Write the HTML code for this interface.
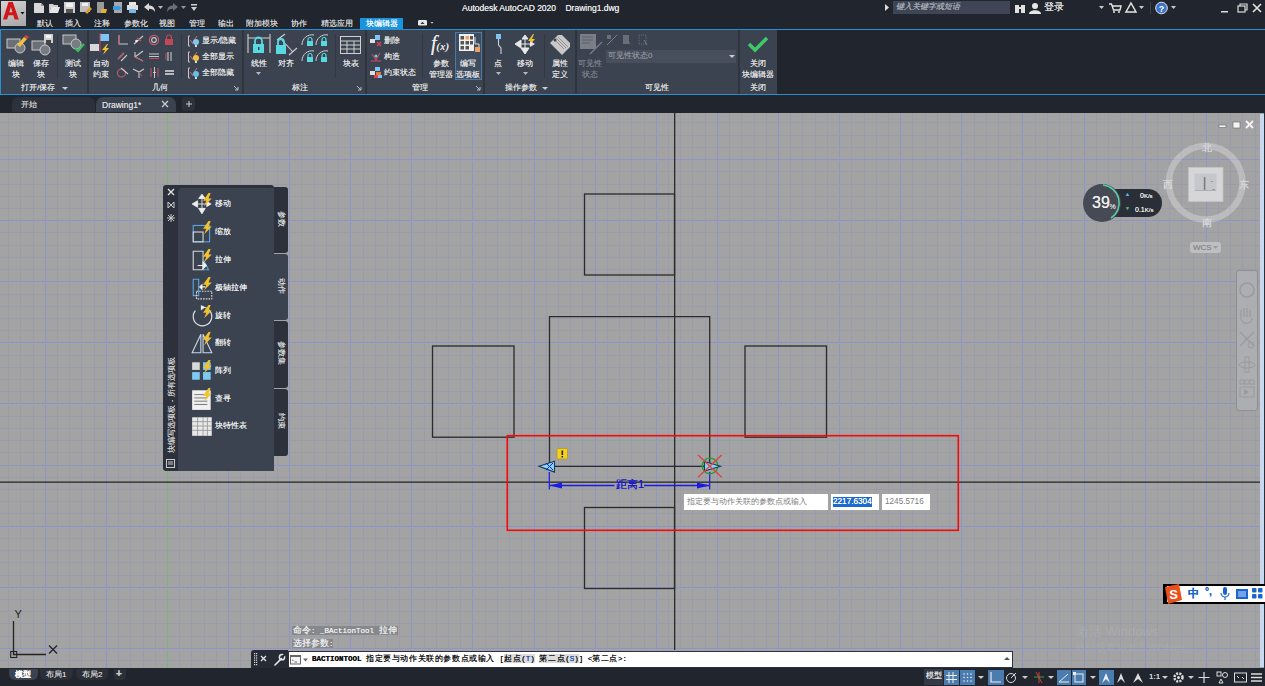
<!DOCTYPE html><html><head><meta charset="utf-8"><style>
*{margin:0;padding:0;box-sizing:border-box}
html,body{width:1265px;height:686px;overflow:hidden;background:#21252d;font-family:"Liberation Sans",sans-serif;color:#e6e6e6}
.a{position:absolute}
.t{position:absolute;white-space:nowrap;line-height:1;font-weight:500;text-shadow:0 0 0.6px currentColor}
svg.a{overflow:visible}
.m{font-family:'Liberation Mono',monospace;font-size:7.5px;letter-spacing:0}
</style></head><body>

<div class="a" style="left:0px;top:0px;width:1265px;height:29px;background:#21252d;"></div>
<div class="a" style="left:1px;top:1px;width:25px;height:25px;background:linear-gradient(160deg,#d4d4d4,#a6a6a6)"></div>
<svg class="a" style="left:0px;top:0px;" width="27" height="27" viewBox="0 0 27 27"><path d="M3 19.5 L8.5 2 H12.8 L18.8 19.5 H14.6 L13.3 15.3 H8.4 L7.1 19.5 Z M9.3 12.3 H12.4 L10.9 7 Z" fill="#d0181c" fill-rule="evenodd"/><path d="M20.5 12 H24.5 L22.5 14.5 Z" fill="#111"/></svg>
<svg class="a" style="left:33px;top:2px;" width="12" height="12" viewBox="0 0 12 12"><path d="M1 1 H8 L11 4 V11 H1 Z" fill="#d8d8d8"/><path d="M8 1 V4 H11" fill="#9a9a9a"/></svg>
<svg class="a" style="left:49px;top:2px;" width="12" height="12" viewBox="0 0 12 12"><path d="M0 2 H4 L5 3 H9 V5 H2 L0 11 Z" fill="#d0d0d0"/><path d="M2 5 H11 L9 11 H0 Z" fill="#e6e6e6"/></svg>
<svg class="a" style="left:64px;top:2px;" width="12" height="12" viewBox="0 0 12 12"><rect x="0" y="0" width="11" height="11" fill="#cfcfcf"/><rect x="2" y="1" width="7" height="4" fill="#f2f2f2"/><rect x="2" y="7" width="7" height="4" fill="#555"/></svg>
<svg class="a" style="left:80px;top:2px;" width="12" height="12" viewBox="0 0 12 12"><rect x="0" y="0" width="10" height="10" fill="#bdbdbd"/><rect x="2" y="1" width="6" height="3" fill="#eee"/><path d="M5 10 L10 5 L12 7 L7 12 Z" fill="#e0a030"/></svg>
<svg class="a" style="left:97px;top:2px;" width="12" height="12" viewBox="0 0 12 12"><rect x="0" y="0" width="7" height="11" fill="#9a9a9a"/><path d="M4 7 H10 L9 11 H4 Z" fill="#e8b030"/></svg>
<svg class="a" style="left:113px;top:2px;" width="12" height="12" viewBox="0 0 12 12"><rect x="1" y="0" width="8" height="11" fill="#a8a8a8"/><path d="M0 4 H6 L9 6 L6 8 H0 Z" fill="#3a9ae0"/></svg>
<svg class="a" style="left:127px;top:2px;" width="12" height="12" viewBox="0 0 12 12"><rect x="2" y="0" width="7" height="3" fill="#e8e8e8"/><rect x="0" y="3" width="11" height="5" fill="#e0e0e0"/><rect x="2" y="7" width="7" height="4" fill="#7ab8e8"/></svg>
<svg class="a" style="left:144px;top:2px;" width="12" height="12" viewBox="0 0 12 12"><path d="M0 5 L5 1 V3.5 C9 3.5 11 6 11 10 C9.5 7.5 8 6.8 5 6.8 V9 Z" fill="#d8d8d8"/></svg>
<svg class="a" style="left:167px;top:2px;" width="12" height="12" viewBox="0 0 12 12"><path d="M11 5 L6 1 V3.5 C2 3.5 0 6 0 10 C1.5 7.5 3 6.8 6 6.8 V9 Z" fill="#6a6e76"/></svg>
<svg class="a" style="left:191px;top:2px;" width="12" height="12" viewBox="0 0 12 12"><rect x="0" y="2" width="6" height="1.5" fill="#d0d0d0"/><path d="M0 5 H6 L3 9 Z" fill="#d0d0d0"/></svg>
<svg class="a" style="left:158px;top:6px;" width="5" height="4" viewBox="0 0 5 4"><path d="M0 0 H5 L2.5 3 Z" fill="#bbb"/></svg>
<svg class="a" style="left:181px;top:6px;" width="5" height="4" viewBox="0 0 5 4"><path d="M0 0 H5 L2.5 3 Z" fill="#999"/></svg>
<div class="t" style="left:462px;top:4px;font-size:8.5px;color:#e8e8e8;">Autodesk AutoCAD 2020&nbsp;&nbsp;&nbsp;&nbsp;Drawing1.dwg</div>
<svg class="a" style="left:885px;top:4px;" width="5" height="7" viewBox="0 0 5 7"><path d="M0 0 L4 3.5 L0 7 Z" fill="#ddd"/></svg>
<div class="a" style="left:893px;top:1px;width:117px;height:13px;background:#3e4554;"></div>
<div class="t" style="left:896px;top:3px;font-size:8px;color:#a8aeb8;font-style:italic">键入关键字或短语</div>
<svg class="a" style="left:1014px;top:3px;" width="12" height="11" viewBox="0 0 12 11"><rect x="1" y="2" width="4" height="8" fill="#e0e0e0"/><rect x="7" y="2" width="4" height="8" fill="#e0e0e0"/><rect x="4" y="4" width="4" height="2" fill="#e0e0e0"/></svg>
<svg class="a" style="left:1029px;top:2px;" width="12" height="12" viewBox="0 0 12 12"><circle cx="6" cy="4" r="3" fill="#e6e6e6"/><path d="M0 12 C0 7 12 7 12 12 Z" fill="#e6e6e6"/></svg>
<div class="t" style="left:1044px;top:2px;font-size:10px;color:#e8e8e8;">登录</div>
<svg class="a" style="left:1099px;top:6px;" width="5" height="4" viewBox="0 0 5 4"><path d="M0 0 H5 L2.5 3 Z" fill="#ccc"/></svg>
<svg class="a" style="left:1109px;top:3px;" width="13" height="10" viewBox="0 0 13 10"><path d="M0 1 H2.5 L4.5 7 H11 L12 3 H3.5" fill="none" stroke="#e6e6e6" stroke-width="1.4"/><circle cx="5" cy="9" r="1" fill="#e6e6e6"/><circle cx="10" cy="9" r="1" fill="#e6e6e6"/></svg>
<svg class="a" style="left:1125px;top:2px;" width="12" height="11" viewBox="0 0 12 11"><path d="M6 1 L11 10 H1 Z" fill="none" stroke="#e6e6e6" stroke-width="1.5"/></svg>
<svg class="a" style="left:1139px;top:6px;" width="5" height="4" viewBox="0 0 5 4"><path d="M0 0 H5 L2.5 3 Z" fill="#ccc"/></svg>
<div class="a" style="left:1150px;top:2px;width:1px;height:12px;background:#3a3f48;"></div>
<svg class="a" style="left:1155px;top:1px;" width="13" height="13" viewBox="0 0 13 13"><circle cx="6.5" cy="7" r="5.8" fill="#3a74cc" stroke="#e8e8e8" stroke-width="1"/><text x="6.5" y="10.5" font-size="9" font-weight="bold" text-anchor="middle" fill="#ffffff" font-family="Liberation Sans">?</text></svg>
<svg class="a" style="left:1171px;top:6px;" width="5" height="4" viewBox="0 0 5 4"><path d="M0 0 H5 L2.5 3 Z" fill="#ccc"/></svg>
<svg class="a" style="left:1219px;top:3px;" width="44" height="10" viewBox="0 0 44 10"><rect x="2" y="8" width="7" height="1.5" fill="#ddd"/><rect x="19" y="3" width="7" height="6" fill="none" stroke="#ddd" stroke-width="1.2"/><path d="M21 3 V1 H28 V7 H26" fill="none" stroke="#ddd" stroke-width="1.2"/><path d="M34 1 L42 9 M42 1 L34 9" stroke="#e6e6e6" stroke-width="1.6"/></svg>
<div class="t" style="left:37px;top:20px;font-size:8px;color:#d4d4d4;">默认</div>
<div class="t" style="left:65px;top:20px;font-size:8px;color:#d4d4d4;">插入</div>
<div class="t" style="left:94px;top:20px;font-size:8px;color:#d4d4d4;">注释</div>
<div class="t" style="left:124px;top:20px;font-size:8px;color:#d4d4d4;">参数化</div>
<div class="t" style="left:159px;top:20px;font-size:8px;color:#d4d4d4;">视图</div>
<div class="t" style="left:189px;top:20px;font-size:8px;color:#d4d4d4;">管理</div>
<div class="t" style="left:218px;top:20px;font-size:8px;color:#d4d4d4;">输出</div>
<div class="t" style="left:246px;top:20px;font-size:8px;color:#d4d4d4;">附加模块</div>
<div class="t" style="left:291px;top:20px;font-size:8px;color:#d4d4d4;">协作</div>
<div class="t" style="left:321px;top:20px;font-size:8px;color:#d4d4d4;">精选应用</div>
<div class="a" style="left:360px;top:18px;width:43px;height:11px;background:#1b94de;"></div>
<div class="t" style="left:366px;top:20px;font-size:8px;color:#ffffff;">块编辑器</div>
<svg class="a" style="left:417px;top:19px;" width="20" height="8" viewBox="0 0 20 8"><rect x="1" y="1" width="9" height="5.5" rx="1.2" fill="#e8e8e8"/><path d="M3.5 5 L5.5 2.8 L7.5 5 Z" fill="#333"/><path d="M13.5 3 H16.5 L15 4.8 Z" fill="#ccc"/></svg>
<div class="a" style="left:0px;top:29px;width:1265px;height:1px;background:#2a8fd0;"></div>
<div class="a" style="left:0px;top:94px;width:1265px;height:1px;background:#2a8fd0;"></div>
<div class="a" style="left:0px;top:30px;width:1265px;height:64px;background:#21252d;"></div>
<div class="a" style="left:0px;top:30px;width:777px;height:64px;background:#3b4250;"></div>
<div class="a" style="left:0px;top:30px;width:1px;height:64px;background:#2a8fd0;"></div>
<div class="a" style="left:87px;top:30px;width:2px;height:64px;background:#2f343d;"></div>
<div class="a" style="left:242px;top:30px;width:2px;height:64px;background:#2f343d;"></div>
<div class="a" style="left:365px;top:30px;width:2px;height:64px;background:#2f343d;"></div>
<div class="a" style="left:483px;top:30px;width:2px;height:64px;background:#2f343d;"></div>
<div class="a" style="left:575px;top:30px;width:2px;height:64px;background:#2f343d;"></div>
<div class="a" style="left:738px;top:30px;width:2px;height:64px;background:#2f343d;"></div>
<div class="a" style="left:57px;top:34px;width:1px;height:44px;background:#323741;"></div>
<div class="a" style="left:181px;top:34px;width:1px;height:44px;background:#323741;"></div>
<div class="a" style="left:335px;top:34px;width:1px;height:44px;background:#323741;"></div>
<div class="a" style="left:422px;top:34px;width:1px;height:44px;background:#323741;"></div>
<div class="a" style="left:544px;top:34px;width:1px;height:44px;background:#323741;"></div>
<div class="t" style="left:-22px;width:120px;text-align:center;top:84px;font-size:8px;color:#e0e0e0;">打开/保存</div>
<svg class="a" style="left:62px;top:87px;" width="6" height="4" viewBox="0 0 6 4"><path d="M0 0 H6 L3 3 Z" fill="#ccc"/></svg>
<div class="t" style="left:100px;width:120px;text-align:center;top:84px;font-size:8px;color:#e0e0e0;">几何</div>
<div class="t" style="left:240px;width:120px;text-align:center;top:84px;font-size:8px;color:#e0e0e0;">标注</div>
<div class="t" style="left:360px;width:120px;text-align:center;top:84px;font-size:8px;color:#e0e0e0;">管理</div>
<div class="t" style="left:461px;width:120px;text-align:center;top:84px;font-size:8px;color:#e0e0e0;">操作参数</div>
<svg class="a" style="left:542px;top:87px;" width="6" height="4" viewBox="0 0 6 4"><path d="M0 0 H6 L3 3 Z" fill="#ccc"/></svg>
<div class="t" style="left:597px;width:120px;text-align:center;top:84px;font-size:8px;color:#e0e0e0;">可见性</div>
<div class="t" style="left:698px;width:120px;text-align:center;top:84px;font-size:8px;color:#e0e0e0;">关闭</div>
<svg class="a" style="left:234px;top:86px;" width="5" height="5" viewBox="0 0 5 5"><path d="M0 0 L4 4 M4 1 V4 H1" stroke="#bbb" stroke-width="1" fill="none"/></svg>
<svg class="a" style="left:357px;top:86px;" width="5" height="5" viewBox="0 0 5 5"><path d="M0 0 L4 4 M4 1 V4 H1" stroke="#bbb" stroke-width="1" fill="none"/></svg>
<svg class="a" style="left:476px;top:86px;" width="5" height="5" viewBox="0 0 5 5"><path d="M0 0 L4 4 M4 1 V4 H1" stroke="#bbb" stroke-width="1" fill="none"/></svg>
<svg class="a" style="left:5px;top:34px;" width="24" height="20" viewBox="0 0 24 20"><rect x="2" y="5" width="13" height="9" fill="#6b6f77" stroke="#c8c8c8" stroke-width="1"/><circle cx="15" cy="14" r="5" fill="#777b82" stroke="#c8c8c8" stroke-width="1"/><path d="M12 11 L19 3 L22 5 L15 13 Z" fill="#f0c040"/><path d="M19 3 L21 1 L24 3 L22 5 Z" fill="#e04040"/></svg>
<div class="t" style="left:-44px;width:120px;text-align:center;top:60px;font-size:8px;color:#e4e4e4;">编辑</div>
<div class="t" style="left:-44px;width:120px;text-align:center;top:71px;font-size:8px;color:#e4e4e4;">块</div>
<svg class="a" style="left:30px;top:34px;" width="24" height="20" viewBox="0 0 24 20"><rect x="2" y="7" width="13" height="9" fill="#6b6f77" stroke="#c8c8c8" stroke-width="1"/><circle cx="15" cy="16" r="5" fill="#777b82" stroke="#c8c8c8" stroke-width="1"/><rect x="14" y="0" width="9" height="9" fill="#d0d0d0"/><rect x="16" y="1" width="5" height="3" fill="#f4f4f4"/><rect x="16" y="6" width="5" height="3" fill="#444"/></svg>
<div class="t" style="left:-19px;width:120px;text-align:center;top:60px;font-size:8px;color:#e4e4e4;">保存</div>
<div class="t" style="left:-19px;width:120px;text-align:center;top:71px;font-size:8px;color:#e4e4e4;">块</div>
<svg class="a" style="left:62px;top:34px;" width="24" height="20" viewBox="0 0 24 20"><rect x="1" y="1" width="13" height="9" fill="#6b6f77" stroke="#c8c8c8" stroke-width="1"/><circle cx="14" cy="10" r="5" fill="#777b82" stroke="#c8c8c8" stroke-width="1"/><path d="M13 14 L16 17 L22 10" stroke="#3cc060" stroke-width="2.2" fill="none"/></svg>
<div class="t" style="left:13px;width:120px;text-align:center;top:60px;font-size:8px;color:#e4e4e4;">测试</div>
<div class="t" style="left:13px;width:120px;text-align:center;top:71px;font-size:8px;color:#e4e4e4;">块</div>
<svg class="a" style="left:90px;top:33px;" width="24" height="24" viewBox="0 0 24 24"><rect x="10" y="1" width="9" height="7" fill="#7ec4f4"/><rect x="0" y="11" width="9" height="7" fill="#d8d8d8"/><rect x="9.5" y="0" width="1" height="19" fill="#d04050"/><path d="M17 11 L12 17 H15 L13 22 L19 15 H16 L18 11 Z" fill="#f0c030"/></svg>
<div class="t" style="left:41px;width:120px;text-align:center;top:60px;font-size:8px;color:#e4e4e4;">自动</div>
<div class="t" style="left:41px;width:120px;text-align:center;top:71px;font-size:8px;color:#e4e4e4;">约束</div>
<svg class="a" style="left:117px;top:35px;" width="11" height="11" viewBox="0 0 11 11"><path d="M2 0 V9 H11" stroke="#c8c8c8" stroke-width="1.2" fill="none"/><path d="M2 0 V9" stroke="#c05060" stroke-width="1.2"/></svg>
<svg class="a" style="left:133px;top:35px;" width="11" height="11" viewBox="0 0 11 11"><path d="M1 9 L10 1" stroke="#c8c8c8" stroke-width="1.2"/><path d="M4 3 L8 6" stroke="#c05060" stroke-width="1.2"/><circle cx="3.5" cy="6" r="1.3" fill="#eee"/></svg>
<svg class="a" style="left:149px;top:35px;" width="11" height="11" viewBox="0 0 11 11"><circle cx="5" cy="5" r="4.6" stroke="#c85a68" stroke-width="1.2" fill="none"/><circle cx="5" cy="5" r="2.3" stroke="#c8c8c8" stroke-width="1.2" fill="none"/></svg>
<svg class="a" style="left:164px;top:35px;" width="11" height="11" viewBox="0 0 11 11"><rect x="1" y="4" width="8" height="6" fill="#c04858"/><path d="M2.5 4 V2.5 A2.5 2.5 0 0 1 7.5 2.5 V4" stroke="#c04858" stroke-width="1.2" fill="none"/></svg>
<svg class="a" style="left:117px;top:51px;" width="11" height="11" viewBox="0 0 11 11"><path d="M1 8 L7 2 M4 10 L10 4" stroke="#c8c8c8" stroke-width="1.1"/><path d="M1 8 L7 2" stroke="#c05060" stroke-width="1.1"/></svg>
<svg class="a" style="left:133px;top:51px;" width="11" height="11" viewBox="0 0 11 11"><path d="M2 1 V6 L10 10 M2 6 L10 0" stroke="#c8c8c8" stroke-width="1.1" fill="none"/><path d="M2 6 L10 10" stroke="#c05060" stroke-width="1.1"/></svg>
<svg class="a" style="left:149px;top:51px;" width="11" height="11" viewBox="0 0 11 11"><path d="M0 3 H10 M0 5.5 H10" stroke="#c8c8c8" stroke-width="1.1"/><path d="M0 7.5 H10" stroke="#c05060" stroke-width="1"/></svg>
<svg class="a" style="left:164px;top:51px;" width="11" height="11" viewBox="0 0 11 11"><path d="M4 1 V10 M7 1 V10" stroke="#c8c8c8" stroke-width="1.1"/><path d="M2 2 V9" stroke="#c05060" stroke-width="1"/></svg>
<svg class="a" style="left:117px;top:67px;" width="11" height="11" viewBox="0 0 11 11"><circle cx="4.5" cy="6" r="4" stroke="#c85a68" stroke-width="1.1" fill="none"/><path d="M4 1 L11 7" stroke="#c8c8c8" stroke-width="1.1"/></svg>
<svg class="a" style="left:133px;top:67px;" width="11" height="11" viewBox="0 0 11 11"><path d="M0 2 L6 5 L11 2 M6 5 V11" stroke="#c8c8c8" stroke-width="1.1" fill="none"/><path d="M6 5 L9 9" stroke="#c05060" stroke-width="1"/></svg>
<svg class="a" style="left:149px;top:67px;" width="11" height="11" viewBox="0 0 11 11"><path d="M2 1 V10 M9 1 V10" stroke="#c05060" stroke-width="1.1"/><path d="M5.5 0 V11 M4 5.5 H7" stroke="#c8c8c8" stroke-width="1"/></svg>
<svg class="a" style="left:164px;top:67px;" width="11" height="11" viewBox="0 0 11 11"><path d="M1 4 H10 M1 7 H10" stroke="#e0e0e0" stroke-width="1.4"/></svg>
<svg class="a" style="left:188px;top:35px;" width="12" height="13" viewBox="0 0 12 13"><path d="M2 1 H0.5 V11 H2" stroke="#c8c8c8" stroke-width="1" fill="none"/><path d="M2 5 L4.5 8 L9 1" stroke="#c86070" stroke-width="1.1" fill="none"/><circle cx="8" cy="7" r="3" fill="#7cc8f0"/><rect x="7" y="10" width="2" height="2" fill="#ddd"/></svg>
<div class="t" style="left:202px;top:37px;font-size:8px;color:#e4e4e4;">显示/隐藏</div>
<svg class="a" style="left:188px;top:51px;" width="12" height="13" viewBox="0 0 12 13"><path d="M2 1 H0.5 V11 H2" stroke="#c8c8c8" stroke-width="1" fill="none"/><path d="M2 5 L4.5 8 L9 1" stroke="#c86070" stroke-width="1.1" fill="none"/><circle cx="8" cy="7" r="3" fill="#f0c040"/><rect x="7" y="10" width="2" height="2" fill="#ddd"/></svg>
<div class="t" style="left:202px;top:53px;font-size:8px;color:#e4e4e4;">全部显示</div>
<svg class="a" style="left:188px;top:66.5px;" width="12" height="13" viewBox="0 0 12 13"><path d="M2 1 H0.5 V11 H2" stroke="#c8c8c8" stroke-width="1" fill="none"/><path d="M2 5 L4.5 8 L9 1" stroke="#c86070" stroke-width="1.1" fill="none"/><circle cx="8" cy="7" r="3" fill="#60c0e8"/><rect x="7" y="10" width="2" height="2" fill="#ddd"/></svg>
<div class="t" style="left:202px;top:68.5px;font-size:8px;color:#e4e4e4;">全部隐藏</div>
<svg class="a" style="left:247px;top:33px;" width="24" height="24" viewBox="0 0 24 24"><path d="M1 1 V20 M23 1 V20 M1 5 H23" stroke="#d0d0d0" stroke-width="1.1"/><rect x="6" y="11" width="11" height="9" fill="#58d8e0"/><path d="M8 11 V8 A3.5 3.5 0 0 1 15 8 V11" stroke="#58d8e0" stroke-width="1.8" fill="none"/><rect x="11" y="14" width="1.5" height="3" fill="#3b4250"/></svg>
<div class="t" style="left:199px;width:120px;text-align:center;top:60px;font-size:8px;color:#e4e4e4;">线性</div>
<svg class="a" style="left:256px;top:72px;" width="5" height="4" viewBox="0 0 5 4"><path d="M0 0 H5 L2.5 3 Z" fill="#bbb"/></svg>
<svg class="a" style="left:275px;top:33px;" width="24" height="24" viewBox="0 0 24 24"><path d="M2 7 L10 1 M14 22 L22 15 M5 5 L18 19" stroke="#d0d0d0" stroke-width="1.1"/><rect x="1" y="12" width="10" height="9" fill="#58d8e0"/><path d="M3 12 V9 A3 3 0 0 1 9 9 V12" stroke="#58d8e0" stroke-width="1.8" fill="none"/></svg>
<div class="t" style="left:226px;width:120px;text-align:center;top:60px;font-size:8px;color:#e4e4e4;">对齐</div>
<svg class="a" style="left:301px;top:33px;" width="15" height="15" viewBox="0 0 15 15"><path d="M1 12 A10 10 0 0 1 13 2" stroke="#d0d0d0" stroke-width="1" fill="none"/><rect x="6" y="8" width="6" height="5" fill="#58d8e0"/><path d="M7 8 V6.5 A2 2 0 0 1 11 6.5 V8" stroke="#58d8e0" stroke-width="1.2" fill="none"/></svg>
<svg class="a" style="left:315px;top:33px;" width="15" height="15" viewBox="0 0 15 15"><path d="M1 12 A10 10 0 0 1 13 2" stroke="#d0d0d0" stroke-width="1" fill="none"/><rect x="6" y="8" width="6" height="5" fill="#58d8e0"/><path d="M7 8 V6.5 A2 2 0 0 1 11 6.5 V8" stroke="#58d8e0" stroke-width="1.2" fill="none"/></svg>
<svg class="a" style="left:301px;top:49px;" width="15" height="15" viewBox="0 0 15 15"><path d="M1 12 A10 10 0 0 1 13 2" stroke="#d0d0d0" stroke-width="1" fill="none"/><rect x="6" y="8" width="6" height="5" fill="#58d8e0"/><path d="M7 8 V6.5 A2 2 0 0 1 11 6.5 V8" stroke="#58d8e0" stroke-width="1.2" fill="none"/></svg>
<svg class="a" style="left:315px;top:49px;" width="15" height="15" viewBox="0 0 15 15"><path d="M1 12 A10 10 0 0 1 13 2" stroke="#d0d0d0" stroke-width="1" fill="none"/><rect x="6" y="8" width="6" height="5" fill="#58d8e0"/><path d="M7 8 V6.5 A2 2 0 0 1 11 6.5 V8" stroke="#58d8e0" stroke-width="1.2" fill="none"/></svg>
<svg class="a" style="left:340px;top:36px;" width="21" height="19" viewBox="0 0 21 19"><rect x="0.5" y="0.5" width="20" height="17" fill="none" stroke="#d0d0d0" stroke-width="1"/><path d="M0.5 5 H20.5 M0.5 9 H20.5 M0.5 13 H20.5 M7 5 V17.5 M14 5 V17.5" stroke="#d0d0d0" stroke-width="1"/></svg>
<div class="t" style="left:291px;width:120px;text-align:center;top:60px;font-size:8px;color:#e4e4e4;">块表</div>
<svg class="a" style="left:370px;top:35px;" width="12" height="12" viewBox="0 0 12 12"><rect x="5" y="0" width="5" height="5" fill="#7ec4f4"/><rect x="0" y="4" width="5" height="4" fill="#e0e0e0"/><path d="M7 7 L11 11 M11 7 L7 11" stroke="#e04050" stroke-width="1.3"/></svg>
<div class="t" style="left:384px;top:37px;font-size:8px;color:#e4e4e4;">删除</div>
<svg class="a" style="left:370px;top:51px;" width="12" height="12" viewBox="0 0 12 12"><path d="M1 10 H11 M2 3 L6 9 L10 2" stroke="#c85060" stroke-width="1.1" fill="none"/><circle cx="6" cy="5" r="1.5" fill="#7ec4f4"/></svg>
<div class="t" style="left:384px;top:53px;font-size:8px;color:#e4e4e4;">构造</div>
<svg class="a" style="left:370px;top:66.5px;" width="12" height="12" viewBox="0 0 12 12"><rect x="5" y="0" width="5" height="4" fill="#7ec4f4"/><rect x="0" y="4" width="5" height="4" fill="#e0e0e0"/><rect x="6" y="5" width="5" height="3" fill="#e87830"/><rect x="4" y="8" width="4" height="3" fill="#e04050"/><rect x="8" y="8" width="4" height="3" fill="#7ec4f4"/></svg>
<div class="t" style="left:384px;top:68.5px;font-size:8px;color:#e4e4e4;">约束状态</div>
<div class="t" style="left:431px;top:33px;font-size:20px;font-style:italic;color:#e8e8e8;font-family:'Liberation Serif',serif">f<span style="font-size:11px">(x)</span></div>
<div class="t" style="left:381px;width:120px;text-align:center;top:60px;font-size:8px;color:#e4e4e4;">参数</div>
<div class="t" style="left:381px;width:120px;text-align:center;top:71px;font-size:8px;color:#e4e4e4;">管理器</div>
<div class="a" style="left:455px;top:32px;width:27px;height:48px;background:#3e4c5e;border:1px solid #4a78a8"></div>
<svg class="a" style="left:459px;top:34px;" width="22" height="24" viewBox="0 0 22 24"><rect x="0" y="0" width="15" height="17" fill="#f0f0f0"/><g fill="#555"><rect x="1.5" y="2" width="3.5" height="3.5"/><rect x="1.5" y="7" width="3.5" height="3.5"/><rect x="1.5" y="12" width="3.5" height="3.5"/><rect x="6.5" y="7" width="3.5" height="3.5"/><rect x="6.5" y="12" width="3.5" height="3.5"/><rect x="11" y="2" width="3" height="3.5"/><rect x="11" y="7" width="3" height="3.5"/></g><rect x="6.5" y="2" width="3.5" height="3.5" fill="#f0a060"/><path d="M16 3 V10 H20 V13" stroke="#e0e0e0" stroke-width="1" fill="none"/><rect x="16" y="13" width="5" height="5" fill="#f0a060"/></svg>
<div class="t" style="left:408px;width:120px;text-align:center;top:60px;font-size:8px;color:#e4e4e4;">编写</div>
<div class="t" style="left:408px;width:120px;text-align:center;top:71px;font-size:8px;color:#e4e4e4;">选项板</div>
<svg class="a" style="left:492px;top:33px;" width="14" height="24" viewBox="0 0 14 24"><rect x="4" y="1" width="5" height="5" fill="#7ec4f4"/><path d="M6.5 6 V12 L9 15 V21" stroke="#d0d0d0" stroke-width="1.1" fill="none"/></svg>
<div class="t" style="left:438px;width:120px;text-align:center;top:60px;font-size:8px;color:#e4e4e4;">点</div>
<svg class="a" style="left:496px;top:72px;" width="5" height="4" viewBox="0 0 5 4"><path d="M0 0 H5 L2.5 3 Z" fill="#bbb"/></svg>
<svg class="a" style="left:514px;top:33px;" width="24" height="24" viewBox="0 0 24 24"><path d="M1 11 L7 7 V15 Z M11 21 L7 15 H15 Z M7 11 H16 M11 6 V16 M11 2 L8 6 H14 Z" fill="#e8e8e8" stroke="#e8e8e8" stroke-width="1"/><path d="M19 1 L14 8 H17 L15 13 L21 6 H18 L20 1 Z" fill="#f0c030"/><path d="M21 11 L16 8 V14 Z" fill="#e8e8e8"/></svg>
<div class="t" style="left:465px;width:120px;text-align:center;top:60px;font-size:8px;color:#e4e4e4;">移动</div>
<svg class="a" style="left:523px;top:72px;" width="5" height="4" viewBox="0 0 5 4"><path d="M0 0 H5 L2.5 3 Z" fill="#bbb"/></svg>
<svg class="a" style="left:549px;top:34px;" width="22" height="22" viewBox="0 0 22 22"><path d="M1 9 L9 1 H13 L21 9 V13 L13 21 L1 9 Z" fill="#c8c8c8" transform="rotate(0)"/><path d="M5 5 L15 15 M7 4 L17 14 M9 3 L19 13" stroke="#888" stroke-width="0.8"/><circle cx="6" cy="6" r="1.5" fill="#3b4250"/></svg>
<div class="t" style="left:500px;width:120px;text-align:center;top:60px;font-size:8px;color:#e4e4e4;">属性</div>
<div class="t" style="left:500px;width:120px;text-align:center;top:71px;font-size:8px;color:#e4e4e4;">定义</div>
<svg class="a" style="left:580px;top:34px;" width="23" height="22" viewBox="0 0 23 22"><rect x="0" y="0" width="16" height="15" fill="#7a7e86"/><path d="M2 3 H13 M2 6 H13 M2 9 H10" stroke="#5a5e66" stroke-width="1.2"/><path d="M10 20 L22 8" stroke="#7a7e86" stroke-width="1.2"/></svg>
<div class="t" style="left:530px;width:120px;text-align:center;top:60px;font-size:8px;color:#7a7f88;">可见性</div>
<div class="t" style="left:530px;width:120px;text-align:center;top:71px;font-size:8px;color:#7a7f88;">状态</div>
<svg class="a" style="left:607px;top:35px;" width="48" height="11" viewBox="0 0 48 11"><rect x="0" y="0" width="4" height="4" fill="#6a6e76"/><path d="M0 10 L10 0" stroke="#7a7e86" stroke-width="1"/><rect x="16" y="0" width="6" height="9" fill="#6a6e76"/><path d="M21 5 L24 10 L22 8 Z" fill="#7a7e86"/><rect x="32" y="0" width="7" height="9" fill="none" stroke="#6a6e76" stroke-dasharray="1 1"/><path d="M37 5 L40 10" stroke="#7a7e86"/></svg>
<div class="a" style="left:606px;top:50px;width:130px;height:13px;background:#474e5c;"></div>
<div class="t" style="left:608px;top:52px;font-size:8px;color:#8a8f98;">可见性状态0</div>
<svg class="a" style="left:729px;top:55px;" width="6" height="4" viewBox="0 0 6 4"><path d="M0 0 H6 L3 3 Z" fill="#ccc"/></svg>
<svg class="a" style="left:747px;top:36px;" width="22" height="16" viewBox="0 0 22 16"><path d="M2 8 L8 14 L20 2" stroke="#40c868" stroke-width="3.5" fill="none"/></svg>
<div class="t" style="left:698px;width:120px;text-align:center;top:60px;font-size:8px;color:#e4e4e4;">关闭</div>
<div class="t" style="left:698px;width:120px;text-align:center;top:71px;font-size:8px;color:#e4e4e4;">块编辑器</div>
<div class="a" style="left:0px;top:95px;width:1265px;height:18px;background:#21252d;"></div>
<div class="a" style="left:12px;top:97px;width:83px;height:15px;background:#2c313b;border-radius:7px 7px 0 0"></div>
<div class="a" style="left:96px;top:97px;width:80px;height:15px;background:#3b4250;border-radius:7px 7px 0 0"></div>
<div class="a" style="left:182px;top:97px;width:13px;height:14px;background:#2c313b;border-radius:3px"></div>
<div class="t" style="left:21px;top:101px;font-size:8px;color:#c8c8c8;">开始</div>
<div class="t" style="left:102px;top:100.5px;font-size:8.5px;color:#d8d8d8;">Drawing1*</div>
<svg class="a" style="left:161px;top:100px;" width="8" height="8" viewBox="0 0 8 8"><path d="M1 1 L7 7 M7 1 L1 7" stroke="#ccc" stroke-width="1.3"/></svg>
<svg class="a" style="left:185px;top:100px;" width="8" height="8" viewBox="0 0 8 8"><path d="M4 1 V7 M1 4 H7" stroke="#c4c4c4" stroke-width="1.1"/></svg>
<div class="a" style="left:0;top:113px;width:1265px;height:555px;background:#a3a3a4;overflow:hidden">
<svg width="1265" height="555" style="position:absolute;left:0;top:0" shape-rendering="crispEdges"><rect x="8" y="0" width="1" height="555" fill="#9b9ca9"/><rect x="20" y="0" width="1" height="555" fill="#9b9ca9"/><rect x="33" y="0" width="1" height="555" fill="#9b9ca9"/><rect x="45" y="0" width="1" height="555" fill="#9095bc"/><rect x="46" y="0" width="1" height="555" fill="#a0a2b4"/><rect x="57" y="0" width="1" height="555" fill="#9b9ca9"/><rect x="69" y="0" width="1" height="555" fill="#9b9ca9"/><rect x="81" y="0" width="1" height="555" fill="#9b9ca9"/><rect x="94" y="0" width="1" height="555" fill="#9b9ca9"/><rect x="106" y="0" width="1" height="555" fill="#9095bc"/><rect x="107" y="0" width="1" height="555" fill="#a0a2b4"/><rect x="118" y="0" width="1" height="555" fill="#9b9ca9"/><rect x="130" y="0" width="1" height="555" fill="#9b9ca9"/><rect x="143" y="0" width="1" height="555" fill="#9b9ca9"/><rect x="155" y="0" width="1" height="555" fill="#9b9ca9"/><rect x="167" y="0" width="1" height="555" fill="#80b080"/><rect x="168" y="0" width="1" height="555" fill="#98ac98"/><rect x="179" y="0" width="1" height="555" fill="#9b9ca9"/><rect x="191" y="0" width="1" height="555" fill="#9b9ca9"/><rect x="204" y="0" width="1" height="555" fill="#9b9ca9"/><rect x="216" y="0" width="1" height="555" fill="#9b9ca9"/><rect x="228" y="0" width="1" height="555" fill="#9095bc"/><rect x="229" y="0" width="1" height="555" fill="#a0a2b4"/><rect x="240" y="0" width="1" height="555" fill="#9b9ca9"/><rect x="253" y="0" width="1" height="555" fill="#9b9ca9"/><rect x="265" y="0" width="1" height="555" fill="#9b9ca9"/><rect x="277" y="0" width="1" height="555" fill="#9b9ca9"/><rect x="289" y="0" width="1" height="555" fill="#9095bc"/><rect x="290" y="0" width="1" height="555" fill="#a0a2b4"/><rect x="301" y="0" width="1" height="555" fill="#9b9ca9"/><rect x="314" y="0" width="1" height="555" fill="#9b9ca9"/><rect x="326" y="0" width="1" height="555" fill="#9b9ca9"/><rect x="338" y="0" width="1" height="555" fill="#9b9ca9"/><rect x="350" y="0" width="1" height="555" fill="#9095bc"/><rect x="351" y="0" width="1" height="555" fill="#a0a2b4"/><rect x="363" y="0" width="1" height="555" fill="#9b9ca9"/><rect x="375" y="0" width="1" height="555" fill="#9b9ca9"/><rect x="387" y="0" width="1" height="555" fill="#9b9ca9"/><rect x="399" y="0" width="1" height="555" fill="#9b9ca9"/><rect x="411" y="0" width="1" height="555" fill="#9095bc"/><rect x="412" y="0" width="1" height="555" fill="#a0a2b4"/><rect x="424" y="0" width="1" height="555" fill="#9b9ca9"/><rect x="436" y="0" width="1" height="555" fill="#9b9ca9"/><rect x="448" y="0" width="1" height="555" fill="#9b9ca9"/><rect x="460" y="0" width="1" height="555" fill="#9b9ca9"/><rect x="472" y="0" width="1" height="555" fill="#9095bc"/><rect x="473" y="0" width="1" height="555" fill="#a0a2b4"/><rect x="485" y="0" width="1" height="555" fill="#9b9ca9"/><rect x="497" y="0" width="1" height="555" fill="#9b9ca9"/><rect x="509" y="0" width="1" height="555" fill="#9b9ca9"/><rect x="521" y="0" width="1" height="555" fill="#9b9ca9"/><rect x="534" y="0" width="1" height="555" fill="#9095bc"/><rect x="535" y="0" width="1" height="555" fill="#a0a2b4"/><rect x="546" y="0" width="1" height="555" fill="#9b9ca9"/><rect x="558" y="0" width="1" height="555" fill="#9b9ca9"/><rect x="570" y="0" width="1" height="555" fill="#9b9ca9"/><rect x="582" y="0" width="1" height="555" fill="#9b9ca9"/><rect x="595" y="0" width="1" height="555" fill="#9095bc"/><rect x="596" y="0" width="1" height="555" fill="#a0a2b4"/><rect x="607" y="0" width="1" height="555" fill="#9b9ca9"/><rect x="619" y="0" width="1" height="555" fill="#9b9ca9"/><rect x="631" y="0" width="1" height="555" fill="#9b9ca9"/><rect x="644" y="0" width="1" height="555" fill="#9b9ca9"/><rect x="656" y="0" width="1" height="555" fill="#9095bc"/><rect x="657" y="0" width="1" height="555" fill="#a0a2b4"/><rect x="668" y="0" width="1" height="555" fill="#9b9ca9"/><rect x="680" y="0" width="1" height="555" fill="#9b9ca9"/><rect x="692" y="0" width="1" height="555" fill="#9b9ca9"/><rect x="705" y="0" width="1" height="555" fill="#9b9ca9"/><rect x="717" y="0" width="1" height="555" fill="#9095bc"/><rect x="718" y="0" width="1" height="555" fill="#a0a2b4"/><rect x="729" y="0" width="1" height="555" fill="#9b9ca9"/><rect x="741" y="0" width="1" height="555" fill="#9b9ca9"/><rect x="754" y="0" width="1" height="555" fill="#9b9ca9"/><rect x="766" y="0" width="1" height="555" fill="#9b9ca9"/><rect x="778" y="0" width="1" height="555" fill="#9095bc"/><rect x="779" y="0" width="1" height="555" fill="#a0a2b4"/><rect x="790" y="0" width="1" height="555" fill="#9b9ca9"/><rect x="802" y="0" width="1" height="555" fill="#9b9ca9"/><rect x="815" y="0" width="1" height="555" fill="#9b9ca9"/><rect x="827" y="0" width="1" height="555" fill="#9b9ca9"/><rect x="839" y="0" width="1" height="555" fill="#9095bc"/><rect x="840" y="0" width="1" height="555" fill="#a0a2b4"/><rect x="851" y="0" width="1" height="555" fill="#9b9ca9"/><rect x="864" y="0" width="1" height="555" fill="#9b9ca9"/><rect x="876" y="0" width="1" height="555" fill="#9b9ca9"/><rect x="888" y="0" width="1" height="555" fill="#9b9ca9"/><rect x="900" y="0" width="1" height="555" fill="#9095bc"/><rect x="901" y="0" width="1" height="555" fill="#a0a2b4"/><rect x="912" y="0" width="1" height="555" fill="#9b9ca9"/><rect x="925" y="0" width="1" height="555" fill="#9b9ca9"/><rect x="937" y="0" width="1" height="555" fill="#9b9ca9"/><rect x="949" y="0" width="1" height="555" fill="#9b9ca9"/><rect x="961" y="0" width="1" height="555" fill="#9095bc"/><rect x="962" y="0" width="1" height="555" fill="#a0a2b4"/><rect x="974" y="0" width="1" height="555" fill="#9b9ca9"/><rect x="986" y="0" width="1" height="555" fill="#9b9ca9"/><rect x="998" y="0" width="1" height="555" fill="#9b9ca9"/><rect x="1010" y="0" width="1" height="555" fill="#9b9ca9"/><rect x="1022" y="0" width="1" height="555" fill="#9095bc"/><rect x="1023" y="0" width="1" height="555" fill="#a0a2b4"/><rect x="1035" y="0" width="1" height="555" fill="#9b9ca9"/><rect x="1047" y="0" width="1" height="555" fill="#9b9ca9"/><rect x="1059" y="0" width="1" height="555" fill="#9b9ca9"/><rect x="1071" y="0" width="1" height="555" fill="#9b9ca9"/><rect x="1084" y="0" width="1" height="555" fill="#9095bc"/><rect x="1085" y="0" width="1" height="555" fill="#a0a2b4"/><rect x="1096" y="0" width="1" height="555" fill="#9b9ca9"/><rect x="1108" y="0" width="1" height="555" fill="#9b9ca9"/><rect x="1120" y="0" width="1" height="555" fill="#9b9ca9"/><rect x="1132" y="0" width="1" height="555" fill="#9b9ca9"/><rect x="1145" y="0" width="1" height="555" fill="#9095bc"/><rect x="1146" y="0" width="1" height="555" fill="#a0a2b4"/><rect x="1157" y="0" width="1" height="555" fill="#9b9ca9"/><rect x="1169" y="0" width="1" height="555" fill="#9b9ca9"/><rect x="1181" y="0" width="1" height="555" fill="#9b9ca9"/><rect x="1193" y="0" width="1" height="555" fill="#9b9ca9"/><rect x="1206" y="0" width="1" height="555" fill="#9095bc"/><rect x="1207" y="0" width="1" height="555" fill="#a0a2b4"/><rect x="1218" y="0" width="1" height="555" fill="#9b9ca9"/><rect x="1230" y="0" width="1" height="555" fill="#9b9ca9"/><rect x="1242" y="0" width="1" height="555" fill="#9b9ca9"/><rect x="1255" y="0" width="1" height="555" fill="#9b9ca9"/><rect x="0" y="9" width="1265" height="1" fill="#9b9ca9"/><rect x="0" y="22" width="1265" height="1" fill="#9b9ca9"/><rect x="0" y="34" width="1265" height="1" fill="#9b9ca9"/><rect x="0" y="46" width="1265" height="1" fill="#9095bc"/><rect x="0" y="47" width="1265" height="1" fill="#a0a2b4"/><rect x="0" y="58" width="1265" height="1" fill="#9b9ca9"/><rect x="0" y="71" width="1265" height="1" fill="#9b9ca9"/><rect x="0" y="83" width="1265" height="1" fill="#9b9ca9"/><rect x="0" y="95" width="1265" height="1" fill="#9b9ca9"/><rect x="0" y="107" width="1265" height="1" fill="#9095bc"/><rect x="0" y="108" width="1265" height="1" fill="#a0a2b4"/><rect x="0" y="119" width="1265" height="1" fill="#9b9ca9"/><rect x="0" y="132" width="1265" height="1" fill="#9b9ca9"/><rect x="0" y="144" width="1265" height="1" fill="#9b9ca9"/><rect x="0" y="156" width="1265" height="1" fill="#9b9ca9"/><rect x="0" y="168" width="1265" height="1" fill="#9095bc"/><rect x="0" y="169" width="1265" height="1" fill="#a0a2b4"/><rect x="0" y="181" width="1265" height="1" fill="#9b9ca9"/><rect x="0" y="193" width="1265" height="1" fill="#9b9ca9"/><rect x="0" y="205" width="1265" height="1" fill="#9b9ca9"/><rect x="0" y="217" width="1265" height="1" fill="#9b9ca9"/><rect x="0" y="229" width="1265" height="1" fill="#9095bc"/><rect x="0" y="230" width="1265" height="1" fill="#a0a2b4"/><rect x="0" y="242" width="1265" height="1" fill="#9b9ca9"/><rect x="0" y="254" width="1265" height="1" fill="#9b9ca9"/><rect x="0" y="266" width="1265" height="1" fill="#9b9ca9"/><rect x="0" y="278" width="1265" height="1" fill="#9b9ca9"/><rect x="0" y="290" width="1265" height="1" fill="#9095bc"/><rect x="0" y="291" width="1265" height="1" fill="#a0a2b4"/><rect x="0" y="303" width="1265" height="1" fill="#9b9ca9"/><rect x="0" y="315" width="1265" height="1" fill="#9b9ca9"/><rect x="0" y="327" width="1265" height="1" fill="#9b9ca9"/><rect x="0" y="339" width="1265" height="1" fill="#9b9ca9"/><rect x="0" y="352" width="1265" height="1" fill="#9095bc"/><rect x="0" y="353" width="1265" height="1" fill="#a0a2b4"/><rect x="0" y="364" width="1265" height="1" fill="#9b9ca9"/><rect x="0" y="376" width="1265" height="1" fill="#9b9ca9"/><rect x="0" y="388" width="1265" height="1" fill="#9b9ca9"/><rect x="0" y="400" width="1265" height="1" fill="#9b9ca9"/><rect x="0" y="413" width="1265" height="1" fill="#9095bc"/><rect x="0" y="414" width="1265" height="1" fill="#a0a2b4"/><rect x="0" y="425" width="1265" height="1" fill="#9b9ca9"/><rect x="0" y="437" width="1265" height="1" fill="#9b9ca9"/><rect x="0" y="449" width="1265" height="1" fill="#9b9ca9"/><rect x="0" y="462" width="1265" height="1" fill="#9b9ca9"/><rect x="0" y="474" width="1265" height="1" fill="#9095bc"/><rect x="0" y="475" width="1265" height="1" fill="#a0a2b4"/><rect x="0" y="486" width="1265" height="1" fill="#9b9ca9"/><rect x="0" y="498" width="1265" height="1" fill="#9b9ca9"/><rect x="0" y="510" width="1265" height="1" fill="#9b9ca9"/><rect x="0" y="523" width="1265" height="1" fill="#9b9ca9"/><rect x="0" y="535" width="1265" height="1" fill="#9095bc"/><rect x="0" y="536" width="1265" height="1" fill="#a0a2b4"/><rect x="0" y="547" width="1265" height="1" fill="#9b9ca9"/></svg>
</div>
<svg class="a" style="left:0;top:0" width="1265" height="686"><rect x="0" y="481.5" width="1260" height="1.3" fill="#2a2a2a"/><rect x="674" y="113" width="1.3" height="537" fill="#2a2a2a"/><rect x="584.5" y="194" width="90.0" height="81" fill="none" stroke="#2a2a2a" stroke-width="1.3"/><rect x="432.5" y="346" width="81.5" height="91.19999999999999" fill="none" stroke="#2a2a2a" stroke-width="1.3"/><rect x="745" y="346" width="81.5" height="91.19999999999999" fill="none" stroke="#2a2a2a" stroke-width="1.3"/><rect x="584.5" y="507.5" width="90.0" height="81.0" fill="none" stroke="#2a2a2a" stroke-width="1.3"/><path d="M549.5 466 V316.7 H709.7 V466" fill="none" stroke="#2a2a2a" stroke-width="1.3"/><path d="M552 466.3 H705" stroke="#2a2a2a" stroke-width="1.3"/><rect x="507.3" y="435.7" width="450.99999999999994" height="94.59999999999997" fill="none" stroke="#f50a0a" stroke-width="1.6"/><path d="M549.3 472 V489.5 M709.7 472 V489.5" stroke="#1a1ae6" stroke-width="1.2"/><path d="M549.3 485.5 H614.5 M644 485.5 H709.7" stroke="#1a1ae6" stroke-width="1.3"/><path d="M549.3 485.5 L562 482.5 V488.5 Z M709.7 485.5 L697 482.5 V488.5 Z" fill="#1a1ae6"/><path d="M539 466.2 L554.5 461.3 V472.1 Z" fill="#86d8f4" stroke="#1a3a5a" stroke-width="1.1"/><path d="M546 463 L553 470 M553 463 L546 470" stroke="#1a1ae6" stroke-width="1"/><circle cx="710" cy="466" r="7.8" fill="none" stroke="#20a030" stroke-width="1.3"/><path d="M704.5 461.5 L720.5 466.2 L704.5 471 Z" fill="#86d8f4" stroke="#1a3a5a" stroke-width="1.1"/><path d="M698 455 L721.7 477.3 M721.7 455 L698 477.3" stroke="#e83c3c" stroke-width="1.2"/><rect x="557" y="448.5" width="10.5" height="10.5" rx="1" fill="#f2d21e" stroke="#b8981a" stroke-width="0.8"/><rect x="561.5" y="450.5" width="1.6" height="4.5" fill="#222"/><rect x="561.5" y="456" width="1.6" height="1.5" fill="#222"/></svg>
<div class="t" style="left:616px;top:479px;font-size:11px;color:#1818c8;">距离1</div>
<div class="a" style="left:684px;top:494px;width:144px;height:16px;background:#ffffff;"></div>
<div class="t" style="left:687px;top:498px;font-size:8px;color:#7c7c7c;text-shadow:none">指定要与动作关联的参数点或输入</div>
<div class="a" style="left:831px;top:494px;width:48px;height:16px;background:#ffffff;"></div>
<div class="a" style="left:833px;top:497px;width:39px;height:10px;background:#1a6ad0;"></div>
<div class="t" style="left:833px;top:498px;font-size:8.2px;color:#ffffff;">2217.6304</div>
<div class="a" style="left:882px;top:494px;width:48px;height:16px;background:#ffffff;"></div>
<div class="t" style="left:885px;top:498px;font-size:8.2px;color:#7c7c7c;text-shadow:none">1245.5716</div>
<div class="a" style="left:163px;top:185px;width:111px;height:286px;background:#2c313b;border-radius:3px"></div>
<div class="a" style="left:178px;top:188px;width:96px;height:283px;background:#3b4250;border-radius:4px 0 0 0"></div>
<div class="a" style="left:274px;top:187px;width:14px;height:66px;background:#2c313b;border-radius:0 3px 3px 0"></div>
<div class="a" style="left:274px;top:254px;width:14px;height:66px;background:#3b4250;border-radius:0 3px 3px 0"></div>
<div class="a" style="left:274px;top:321px;width:14px;height:67px;background:#2c313b;border-radius:0 3px 3px 0"></div>
<div class="a" style="left:274px;top:389px;width:14px;height:67px;background:#2c313b;border-radius:0 3px 3px 0"></div>
<div class="t" style="left:251px;top:215px;width:60px;text-align:center;font-size:8px;color:#d8d8d8;transform:rotate(90deg)">参数</div>
<div class="t" style="left:251px;top:282px;width:60px;text-align:center;font-size:8px;color:#d8d8d8;transform:rotate(90deg)">动作</div>
<div class="t" style="left:251px;top:349px;width:60px;text-align:center;font-size:8px;color:#d8d8d8;transform:rotate(90deg)">参数集</div>
<div class="t" style="left:251px;top:417px;width:60px;text-align:center;font-size:8px;color:#d8d8d8;transform:rotate(90deg)">约束</div>
<svg class="a" style="left:167px;top:188px;" width="8" height="8" viewBox="0 0 8 8"><path d="M1 1 L7 7 M7 1 L1 7" stroke="#e0e0e0" stroke-width="1.4"/></svg>
<svg class="a" style="left:167px;top:201px;" width="8" height="8" viewBox="0 0 8 8"><path d="M1 1 V7 M7 1 V7 M1 1 L4 4 L1 7 M7 1 L4 4 L7 7" stroke="#ccc" stroke-width="1" fill="none"/></svg>
<svg class="a" style="left:167px;top:214px;" width="8" height="8" viewBox="0 0 8 8"><path d="M4 0 V8 M0 4 H8 M1 1 L7 7 M7 1 L1 7" stroke="#ccc" stroke-width="1"/></svg>
<div class="t" style="left:122px;top:401px;width:100px;text-align:center;font-size:8px;color:#d0d0d0;transform:rotate(-90deg)">块编写选项板 - 所有选项板</div>
<svg class="a" style="left:166px;top:459px;" width="9" height="9" viewBox="0 0 9 9"><rect x="0.5" y="0.5" width="8" height="8" fill="none" stroke="#ccc"/><path d="M2 3 H7 M2 5 H7" stroke="#ccc"/></svg>
<svg class="a" style="left:190.5px;top:192px" width="23" height="24" viewBox="0 0 21 22"><path d="M1 11 L6 8 V14 Z M10 20 L7 15 H13 Z M6 11 H14 M10 6 V16 M10 2 L7 6 H13 Z" fill="#eee" stroke="#eee" stroke-width="0.8"/><path d="M19 11 L14 8 V14 Z" fill="#eee"/><path d="M16 1 L11 8 H14 L12 13 L19 6 H16 L18 1 Z" fill="#f2c22c"/></svg>
<div class="t" style="left:215px;top:200px;font-size:8px;color:#f0f0f0;">移动</div>
<svg class="a" style="left:190.5px;top:220px" width="23" height="24" viewBox="0 0 21 22"><rect x="2" y="5" width="15" height="15" fill="none" stroke="#5aa8e0" stroke-width="1"/><rect x="2" y="11" width="9" height="9" fill="none" stroke="#d8d8d8" stroke-width="1"/><path d="M16 1 L11 8 H14 L12 13 L19 6 H16 L18 1 Z" fill="#f2c22c"/></svg>
<div class="t" style="left:215px;top:228px;font-size:8px;color:#f0f0f0;">缩放</div>
<svg class="a" style="left:190.5px;top:248px" width="23" height="24" viewBox="0 0 21 22"><path d="M2 3 H11 V20 H2 Z" fill="none" stroke="#d8d8d8"/><path d="M11 10 L16 20 H11" fill="none" stroke="#5aa8e0"/><path d="M6 16 H13 M11 13 L14 16 L11 19 Z" stroke="#eee" fill="#eee"/><path d="M16 1 L11 8 H14 L12 13 L19 6 H16 L18 1 Z" fill="#f2c22c"/></svg>
<div class="t" style="left:215px;top:256px;font-size:8px;color:#f0f0f0;">拉伸</div>
<svg class="a" style="left:190.5px;top:276px" width="23" height="24" viewBox="0 0 21 22"><path d="M2 3 H7 V18 H2 Z" fill="none" stroke="#5aa8e0"/><rect x="5" y="14" width="14" height="7" fill="none" stroke="#d8d8d8" stroke-dasharray="1.5 1"/><path d="M8 10 H13 M8 10 L10 8 V12 Z" stroke="#eee" fill="#eee"/><path d="M16 1 L11 8 H14 L12 13 L19 6 H16 L18 1 Z" fill="#f2c22c"/></svg>
<div class="t" style="left:215px;top:284px;font-size:8px;color:#f0f0f0;">极轴拉伸</div>
<svg class="a" style="left:190.5px;top:304px" width="23" height="24" viewBox="0 0 21 22"><path d="M11 3 A8.5 8.5 0 1 1 4 6" fill="none" stroke="#e0e0e0" stroke-width="1.1"/><path d="M9 1 L13 3 L9 6 Z" fill="#eee"/><path d="M16 1 L11 8 H14 L12 13 L19 6 H16 L18 1 Z" fill="#f2c22c"/></svg>
<div class="t" style="left:215px;top:312px;font-size:8px;color:#f0f0f0;">旋转</div>
<svg class="a" style="left:190.5px;top:331px" width="23" height="24" viewBox="0 0 21 22"><path d="M9 3 L1 20 H9 Z" fill="none" stroke="#c8d8e8"/><path d="M11 3 L19 20 H11 Z" fill="none" stroke="#c8d8e8"/><path d="M16 1 L11 8 H14 L12 13 L19 6 H16 L18 1 Z" fill="#f2c22c"/></svg>
<div class="t" style="left:215px;top:339px;font-size:8px;color:#f0f0f0;">翻转</div>
<svg class="a" style="left:190.5px;top:359px" width="23" height="24" viewBox="0 0 21 22"><rect x="1" y="3" width="7" height="7" fill="#d8d8d8"/><rect x="11" y="3" width="7" height="7" fill="#7ec8f4"/><rect x="1" y="12" width="7" height="7" fill="#7ec8f4"/><rect x="11" y="12" width="7" height="7" fill="#7ec8f4"/><path d="M16 1 L11 8 H14 L12 13 L19 6 H16 L18 1 Z" fill="#f2c22c"/></svg>
<div class="t" style="left:215px;top:367px;font-size:8px;color:#f0f0f0;">阵列</div>
<svg class="a" style="left:190.5px;top:387px" width="23" height="24" viewBox="0 0 21 22"><rect x="1" y="3" width="17" height="18" fill="#f0f0f0"/><path d="M3 7 H15 M3 10 H15 M3 13 H15 M3 16 H15" stroke="#777" stroke-width="0.9"/><path d="M16 1 L11 8 H14 L12 13 L19 6 H16 L18 1 Z" fill="#f2c22c"/></svg>
<div class="t" style="left:215px;top:395px;font-size:8px;color:#f0f0f0;">查寻</div>
<svg class="a" style="left:190.5px;top:414px" width="23" height="24" viewBox="0 0 21 22"><rect x="1" y="3" width="18" height="17" fill="#e8e8e8"/><path d="M1 7 H19 M1 11 H19 M1 15 H19 M6 3 V20 M11 3 V20 M15 3 V20" stroke="#999" stroke-width="0.8"/></svg>
<div class="t" style="left:215px;top:422px;font-size:8px;color:#f0f0f0;">块特性表</div>
<svg class="a" style="left:1160px;top:137px;" width="92" height="92" viewBox="0 0 92 92"><circle cx="45.7" cy="45.8" r="36.8" fill="none" stroke="#ffffff" stroke-width="6.5" opacity="0.27"/><rect x="28.5" y="30.5" width="34.5" height="34" fill="#d6d6d8" stroke="#c4c4c6" stroke-width="0.8"/><rect x="34.5" y="36.5" width="22" height="17.5" fill="#c6c7ca"/><rect x="43.8" y="40" width="1.6" height="13" fill="#7c7d80"/><path d="M35 53.5 H56" stroke="#a8a9ac" stroke-width="0.8"/><rect x="51" y="44" width="1.5" height="1" fill="#8a8b8e"/><rect x="52.5" y="52" width="2" height="1.2" fill="#8a8b8e"/></svg>
<div class="t" style="left:1201.5px;top:143px;font-size:10px;color:#d8d8d8;">北</div>
<div class="t" style="left:1201.5px;top:217.5px;font-size:10px;color:#d8d8d8;">南</div>
<div class="t" style="left:1163px;top:180px;font-size:10px;color:#d8d8d8;">西</div>
<div class="t" style="left:1239px;top:180px;font-size:10px;color:#d8d8d8;">东</div>
<div class="a" style="left:1190px;top:242px;width:31px;height:11px;background:#bebfc2;border-radius:3px"></div>
<div class="t" style="left:1193px;top:244px;font-size:8px;color:#8a8a8a;">WCS</div>
<svg class="a" style="left:1213px;top:246px;" width="6" height="4" viewBox="0 0 6 4"><path d="M0 0 H5 L2.5 3 Z" fill="#999"/></svg>
<svg class="a" style="left:1218px;top:120px;" width="38" height="9" viewBox="0 0 38 9"><rect x="1" y="5" width="7" height="2.5" fill="#f4f4f4" stroke="#666" stroke-width="0.6"/><rect x="15" y="2" width="7" height="6" fill="#f4f4f4" stroke="#666" stroke-width="0.6"/><path d="M28 1 L35 8 M35 1 L28 8" stroke="#f4f4f4" stroke-width="1.8"/></svg>
<div class="a" style="left:1100px;top:189px;width:62px;height:28px;background:#2a2e36;border-radius:14px"></div>
<svg class="a" style="left:1082px;top:183px;" width="40" height="40" viewBox="0 0 40 40"><circle cx="20" cy="20" r="19" fill="#454a54"/><path d="M21 2 A18 18 0 0 1 29 35" stroke="#5ad0a0" stroke-width="1.5" fill="none"/></svg>
<div class="t" style="left:1092px;top:195px;font-size:16px;color:#f0f0f0;font-weight:300">39</div>
<div class="t" style="left:1109.5px;top:203px;font-size:7px;color:#ddd;">%</div>
<div class="t" style="left:1125px;top:192px;font-size:5px;color:#5ab8f0;"><span style="color:#5ab8f0">▲</span></div>
<div class="t" style="left:1140px;top:192px;font-size:7px;color:#f0f0f0;">0<span style="font-size:6px">K/s</span></div>
<div class="t" style="left:1125px;top:206px;font-size:5px;color:#40c060;"><span style="color:#40c060">▼</span></div>
<div class="t" style="left:1135px;top:206px;font-size:7px;color:#f0f0f0;">0.1<span style="font-size:6px">K/s</span></div>
<div class="a" style="left:1236px;top:270px;width:22px;height:141px;background:#adaeb1;border:1px solid #8e8f93;border-radius:3px"></div>
<svg class="a" style="left:1238px;top:280px;" width="18" height="125" viewBox="0 0 18 125"><circle cx="9" cy="10" r="7" fill="none" stroke="#9a9a9c" stroke-width="1.5"/><path d="M9 25 V26" stroke="#999"/><path d="M3 38 V30 M6 37 V28 M9 37 V28 M12 37 V30 M3 38 C3 45 14 45 14 38" stroke="#9a9a9c" stroke-width="1.2" fill="none"/><path d="M2 52 L16 66 M16 52 L2 66" stroke="#9a9a9c" stroke-width="1.2"/><circle cx="13" cy="65" r="3" fill="none" stroke="#9a9a9c"/><rect x="7" y="77" width="4" height="15" fill="none" stroke="#9a9a9c"/><ellipse cx="9" cy="85" rx="8" ry="3" fill="none" stroke="#9a9a9c"/><rect x="2" y="100" width="4" height="4" fill="none" stroke="#9a9a9c"/><rect x="7" y="100" width="4" height="4" fill="none" stroke="#9a9a9c"/><rect x="12" y="100" width="4" height="4" fill="none" stroke="#9a9a9c"/><rect x="2" y="107" width="14" height="10" fill="none" stroke="#9a9a9c"/><path d="M6 109 L11 112 L6 115 Z" fill="#9a9a9c"/></svg>
<div class="a" style="left:1260px;top:114px;width:4px;height:553px;background:#c8d8ee;"></div>
<div class="a" style="left:1264px;top:113px;width:1px;height:555px;background:#2a2e36;"></div>
<svg class="a" style="left:0px;top:600px;" width="60" height="60" viewBox="0 0 60 60"><text x="14.5" y="18" font-size="11" fill="#222" font-family="Liberation Sans">Y</text><path d="M13.5 21 V54.5 H46" stroke="#222" stroke-width="1.3" fill="none"/><rect x="10.7" y="51.5" width="6" height="6" fill="none" stroke="#222" stroke-width="1.1"/><path d="M49 45.5 L57 53.5 M57 45.5 L49 53.5" stroke="#222" stroke-width="1.2"/></svg>
<div class="a" style="left:292px;top:626px;width:106px;height:9px;background:rgba(130,132,136,0.85);"></div>
<div class="t" style="left:293px;top:626px;font-size:8.5px;color:#eeeeee;">命令<span style="font-family:Liberation Mono;font-size:7.5px">: _BActionTool </span>拉伸</div>
<div class="a" style="left:292px;top:639px;width:41px;height:9px;background:rgba(130,132,136,0.85);"></div>
<div class="t" style="left:293px;top:639px;font-size:8.5px;color:#eeeeee;">选择参数<span style="font-family:Liberation Mono;font-size:7.5px">:</span></div>
<div class="a" style="left:251px;top:650px;width:37px;height:18px;background:#262b35;border-radius:3px 0 0 0"></div>
<div class="a" style="left:288px;top:651px;width:725px;height:17px;background:#ffffff;border:1px solid #2c313b"></div>
<svg class="a" style="left:251px;top:651px;" width="36" height="17" viewBox="0 0 36 17"><g fill="#d8d8d8"><rect x="3" y="2" width="1.2" height="1.2"/><rect x="5" y="2" width="1.2" height="1.2"/><rect x="3" y="4.2" width="1.2" height="1.2"/><rect x="5" y="4.2" width="1.2" height="1.2"/><rect x="3" y="6.4" width="1.2" height="1.2"/><rect x="5" y="6.4" width="1.2" height="1.2"/><rect x="3" y="8.6" width="1.2" height="1.2"/><rect x="5" y="8.6" width="1.2" height="1.2"/><rect x="3" y="10.8" width="1.2" height="1.2"/><rect x="5" y="10.8" width="1.2" height="1.2"/><rect x="3" y="13" width="1.2" height="1.2"/><rect x="5" y="13" width="1.2" height="1.2"/></g><path d="M10 5 L15 10 M15 5 L10 10" stroke="#e8e8e8" stroke-width="1.2"/><path d="M24 14 L30.5 7.5" stroke="#e8e8e8" stroke-width="1.6" stroke-linecap="round"/><circle cx="31" cy="6.2" r="2.6" fill="none" stroke="#e8e8e8" stroke-width="1.5"/><path d="M31 6.2 L35 2.2" stroke="#262b35" stroke-width="2"/></svg>
<svg class="a" style="left:290px;top:655px;" width="20" height="10" viewBox="0 0 20 10"><rect x="0.5" y="0.5" width="10" height="8.5" fill="#f4f4f4" stroke="#666"/><rect x="0.5" y="0.5" width="10" height="1.5" fill="#666"/><path d="M2 5 L3.5 5.5 M4.5 7 H7" stroke="#444" stroke-width="0.8"/><path d="M13 3.5 H18 L15.5 6.5 Z" fill="#666"/></svg>
<div class="t" style="left:312px;top:655px;font-size:8px;color:#111;letter-spacing:0.6px"><span class="m"><b>BACTIONTOOL</b> </span>指定要与动作关联的参数点或输入<span class="m"> [</span><span style="background:#dcdcdc">起点<span class="m">(<span style="color:#2050c0">T</span>)</span></span><span class="m"> </span><span style="background:#dcdcdc">第二点<span class="m">(<span style="color:#2050c0">S</span>)</span></span><span class="m">] &lt;</span>第二点<span class="m">&gt;:</span></div>
<svg class="a" style="left:1004px;top:657px;" width="6" height="4" viewBox="0 0 6 4"><path d="M0 3 H6 L3 0 Z" fill="#555"/></svg>
<div class="a" style="left:1163px;top:584px;width:102px;height:20px;background:#000;"></div>
<div class="a" style="left:1167px;top:586px;width:98px;height:16px;background:#ffffff;"></div>
<svg class="a" style="left:1163px;top:583px;" width="20" height="22" viewBox="0 0 20 22"><path d="M2 4 L16 1 L19 17 L5 21 Z" fill="#e8501c"/><text x="10.5" y="16" font-size="13" font-weight="bold" text-anchor="middle" fill="#fff" font-family="Liberation Sans">S</text></svg>
<div class="t" style="left:1188px;top:588px;font-size:11px;color:#1a66d0;font-weight:bold">中</div>
<div class="t" style="left:1205px;top:587px;font-size:10px;color:#1a66d0;font-weight:bold">°,</div>
<svg class="a" style="left:1220px;top:587px;" width="10" height="14" viewBox="0 0 10 14"><rect x="3" y="0" width="4" height="8" rx="2" fill="#1a66d0"/><path d="M1 6 A4 4 0 0 0 9 6 M5 10 V13" stroke="#1a66d0" stroke-width="1.2" fill="none"/></svg>
<svg class="a" style="left:1236px;top:589px;" width="12" height="10" viewBox="0 0 12 10"><rect x="0" y="0" width="12" height="10" fill="#1a66d0"/><path d="M2 3 H10 M2 5 H10 M2 7 H10" stroke="#fff" stroke-width="0.8"/></svg>
<svg class="a" style="left:1252px;top:588px;" width="11" height="11" viewBox="0 0 11 11"><rect x="0" y="0" width="4.5" height="4.5" rx="1" fill="#1a66d0"/><rect x="6" y="0" width="4.5" height="4.5" rx="1" fill="#1a66d0"/><rect x="0" y="6" width="4.5" height="4.5" rx="1" fill="#1a66d0"/><rect x="6" y="6" width="4.5" height="4.5" rx="1" fill="#1a66d0"/></svg>
<div class="t" style="left:1076px;top:625px;font-size:13px;color:rgba(190,190,190,0.2);">激活 Windows</div>
<div class="t" style="left:1076px;top:643px;font-size:9px;color:rgba(190,190,190,0.18);">转到"设置"以激活 Windows。</div>
<div class="a" style="left:0px;top:668px;width:1265px;height:18px;background:#21252d;"></div>
<div class="a" style="left:9px;top:669px;width:29px;height:11px;background:#3b4250;border-radius:0 0 6px 6px"></div>
<div class="a" style="left:40px;top:669px;width:33px;height:11px;background:#2a2f38;border-radius:0 0 6px 6px"></div>
<div class="a" style="left:76px;top:669px;width:32px;height:11px;background:#2a2f38;border-radius:0 0 6px 6px"></div>
<div class="a" style="left:114px;top:669px;width:12px;height:11px;background:#2a2f38;border-radius:0 0 4px 4px"></div>
<div class="t" style="left:15px;top:671px;font-size:8px;color:#fff;font-weight:bold">模型</div>
<div class="t" style="left:46px;top:671px;font-size:8px;color:#ccc;">布局1</div>
<div class="t" style="left:82px;top:671px;font-size:8px;color:#ccc;">布局2</div>
<div class="t" style="left:116px;top:669px;font-size:10px;color:#ccc;font-weight:bold">+</div>
<div class="a" style="left:924px;top:669px;width:19px;height:16px;background:#343a45;"></div>
<div class="t" style="left:926px;top:672px;font-size:8px;color:#e8e8e8;">模型</div>
<div class="a" style="left:944px;top:670px;width:15px;height:15px;background:#4a7cb0;"></div>
<svg class="a" style="left:946px;top:672px;" width="11" height="11" viewBox="0 0 11 11"><path d="M3 0 V11 M7 0 V11 M0 3.5 H11 M0 7.5 H11" stroke="#eee" stroke-width="1"/></svg>
<div class="a" style="left:960px;top:670px;width:15px;height:15px;background:#4a7cb0;"></div>
<svg class="a" style="left:962px;top:672px;" width="11" height="11" viewBox="0 0 11 11"><g fill="#eee"><circle cx="2" cy="2" r="0.8"/><circle cx="5.5" cy="2" r="0.8"/><circle cx="9" cy="2" r="0.8"/><circle cx="2" cy="5.5" r="0.8"/><circle cx="5.5" cy="5.5" r="0.8"/><circle cx="9" cy="5.5" r="0.8"/><circle cx="2" cy="9" r="0.8"/><circle cx="5.5" cy="9" r="0.8"/><circle cx="9" cy="9" r="0.8"/></g></svg>
<svg class="a" style="left:978px;top:676px;" width="6" height="4" viewBox="0 0 6 4"><path d="M0 0 H6 L3 3 Z" fill="#ccc"/></svg>
<div class="a" style="left:988px;top:670px;width:16px;height:15px;background:#4a7cb0;"></div>
<svg class="a" style="left:990px;top:672px;" width="12" height="11" viewBox="0 0 12 11"><path d="M1 0 V10 H11" stroke="#eee" stroke-width="1.2" fill="none"/></svg>
<svg class="a" style="left:1005px;top:671px;" width="12" height="13" viewBox="0 0 12 13"><circle cx="6" cy="7" r="4.5" stroke="#ddd" fill="none"/><path d="M6 7 L11 2" stroke="#ddd"/></svg>
<svg class="a" style="left:1033px;top:671px;" width="12" height="13" viewBox="0 0 12 13"><path d="M3 1 L9 12 M6 1 V12" stroke="#d04040"/><path d="M1 6 L11 6" stroke="#40a040"/></svg>
<svg class="a" style="left:1022px;top:676px;" width="6" height="4" viewBox="0 0 6 4"><path d="M0 0 H6 L3 3 Z" fill="#ccc"/></svg>
<svg class="a" style="left:1048px;top:676px;" width="6" height="4" viewBox="0 0 6 4"><path d="M0 0 H6 L3 3 Z" fill="#ccc"/></svg>
<div class="a" style="left:1057px;top:670px;width:14px;height:15px;background:#4a7cb0;"></div>
<svg class="a" style="left:1058px;top:672px;" width="12" height="11" viewBox="0 0 12 11"><path d="M1 10 L10 2 M1 10 H11" stroke="#eee" stroke-width="1" fill="none"/></svg>
<div class="a" style="left:1072px;top:670px;width:14px;height:15px;background:#4a7cb0;"></div>
<svg class="a" style="left:1073px;top:672px;" width="12" height="11" viewBox="0 0 12 11"><rect x="2" y="2" width="8" height="8" stroke="#eee" fill="none"/><rect x="0" y="0" width="3" height="3" fill="#eee"/></svg>
<svg class="a" style="left:1090px;top:676px;" width="6" height="4" viewBox="0 0 6 4"><path d="M0 0 H6 L3 3 Z" fill="#ccc"/></svg>
<div class="a" style="left:1099px;top:670px;width:15px;height:15px;background:#4a7cb0;"></div>
<svg class="a" style="left:1101px;top:672px;" width="12" height="11" viewBox="0 0 12 11"><path d="M1 11 L5 1 L9 11 L5 7 Z" fill="#eee"/></svg>
<svg class="a" style="left:1116px;top:672px;" width="12" height="11" viewBox="0 0 12 11"><path d="M1 11 L5 1 L9 11 L5 7 Z" fill="#ddd"/></svg>
<svg class="a" style="left:1132px;top:672px;" width="12" height="11" viewBox="0 0 12 11"><path d="M1 11 L6 1 L11 11 L6 7 Z" fill="#ddd"/></svg>
<div class="t" style="left:1149px;top:673px;font-size:8px;color:#ddd;">1:1</div>
<svg class="a" style="left:1162px;top:676px;" width="6" height="4" viewBox="0 0 6 4"><path d="M0 0 H6 L3 3 Z" fill="#ccc"/></svg>
<svg class="a" style="left:1172px;top:671px;" width="13" height="13" viewBox="0 0 13 13"><circle cx="6.5" cy="6.5" r="4" fill="none" stroke="#ddd" stroke-width="2.5" stroke-dasharray="2 1.2"/><circle cx="6.5" cy="6.5" r="1.5" fill="#ddd"/></svg>
<svg class="a" style="left:1188px;top:676px;" width="6" height="4" viewBox="0 0 6 4"><path d="M0 0 H6 L3 3 Z" fill="#ccc"/></svg>
<svg class="a" style="left:1198px;top:671px;" width="12" height="13" viewBox="0 0 12 13"><path d="M6 1 V12 M0.5 6.5 H11.5" stroke="#ddd" stroke-width="1.2"/></svg>
<svg class="a" style="left:1216px;top:671px;" width="13" height="13" viewBox="0 0 13 13"><rect x="1" y="1" width="4" height="4" fill="none" stroke="#ddd"/><circle cx="9" cy="4" r="2.5" fill="none" stroke="#ddd"/><path d="M3 12 L5 8 L7 12 Z" fill="none" stroke="#ddd"/></svg>
<svg class="a" style="left:1234px;top:671px;" width="13" height="13" viewBox="0 0 13 13"><rect x="0.5" y="2" width="12" height="9" fill="none" stroke="#ddd"/><path d="M3 5 L5 7 M10 8 L8 6" stroke="#ddd"/></svg>
<svg class="a" style="left:1250px;top:671px;" width="13" height="13" viewBox="0 0 13 13"><path d="M1 3 H12 M1 6.5 H12 M1 10 H12" stroke="#ddd" stroke-width="1.3"/></svg>
</body></html>
